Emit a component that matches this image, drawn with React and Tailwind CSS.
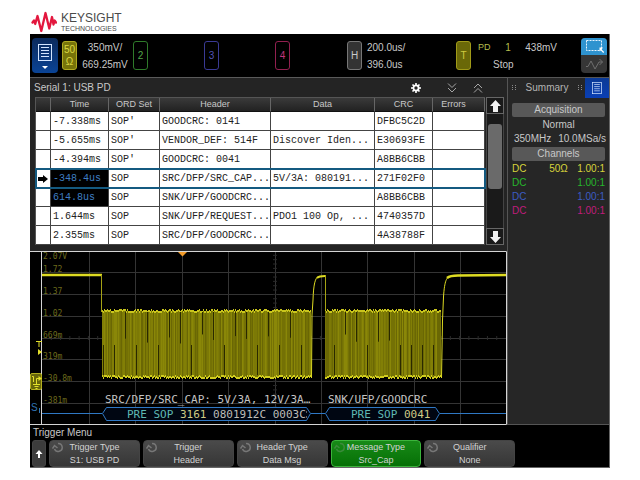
import React from "react";

const rows = [
  { time: "-7.338ms", ord: "SOP'", header: "GOODCRC: 0141", data: "", crc: "DFBC5C2D" },
  { time: "-5.655ms", ord: "SOP'", header: "VENDOR_DEF: 514F", data: "Discover Iden...", crc: "E30693FE" },
  { time: "-4.394ms", ord: "SOP'", header: "GOODCRC: 0041", data: "", crc: "A8BB6CBB" },
  { time: "-348.4us", ord: "SOP", header: "SRC/DFP/SRC_CAP...", data: "5V/3A: 080191...", crc: "271F02F0", selected: true, inView: true },
  { time: "614.8us", ord: "SOP", header: "SNK/UFP/GOODCRC...", data: "", crc: "A8BB6CBB", inView: true },
  { time: "1.644ms", ord: "SOP", header: "SNK/UFP/REQUEST...", data: "PDO1 100 Op, ...", crc: "4740357D" },
  { time: "2.355ms", ord: "SOP", header: "SRC/DFP/GOODCRC...", data: "", crc: "4A38788F" },
];

const softKeys = [
  { label: "Trigger Type", value: "S1: USB PD" },
  { label: "Trigger", value: "Header" },
  { label: "Header Type", value: "Data Msg" },
  { label: "Message Type", value: "Src_Cap", active: true },
  { label: "Qualifier", value: "None" },
];

function Logo() {
  return (
    <header className="flex h-[34px] items-center gap-[4px] pl-[1px] pt-[9px]">
      <svg className="h-[22px] w-[26px]" viewBox="0 0 26 22" fill="none" stroke="#e3173e" strokeWidth="2.3" strokeLinecap="round" strokeLinejoin="round" aria-hidden="true">
        <path d="M1.5 11.5 L3 9.5 L4.2 13 L6.500 5 L10.300 20 L14.500 2 L18.300 17.5 L21 6 L22.500 13.5 L23.600 9.5 L25 11.5" />
      </svg>
      <div className="text-[#4a4a4a]">
        <div className="text-[12px] leading-[14px]">KEYSIGHT</div>
        <div className="text-[7px] leading-[8px]">TECHNOLOGIES</div>
      </div>
    </header>
  );
}

function ListIcon({ className }) {
  return (
    <svg className={className} viewBox="0 0 14 17" fill="none" stroke="#d5e6ff" aria-hidden="true">
      <rect x="0.5" y="0.5" width="13" height="16" />
      <path d="M3 3.5h8M3 6.5h8M3 9.5h8M3 12.5h8" />
    </svg>
  );
}

function Readout({ top, bottom, className }) {
  return (
    <div className={className}>
      <div>{top}</div>
      <div>{bottom}</div>
    </div>
  );
}

const badge = "flex h-[29px] w-[15px] shrink-0 flex-col items-center justify-center rounded-[3px] border text-[10px] leading-[12px]";

function StatusBar() {
  return (
    <div className="flex h-[43px] items-center pl-[2px] pr-[2px] text-[10px] leading-[17px] text-[#c8c8c8]">
      <button aria-label="Menu" className="mr-[4px] flex h-[35px] w-[26px] shrink-0 flex-col items-center justify-end gap-[5px] rounded-[4px] bg-linear-to-b from-[#0b2a5c] to-[#0a4496] pb-[4px]">
        <ListIcon className="h-[17px] w-[14px]" />
        <svg className="h-[3px] w-[6px]" viewBox="0 0 6 3" aria-hidden="true"><path d="M0 0h6L3 3z" fill="#fff" /></svg>
      </button>
      <div className="grid flex-1 grid-cols-[71fr_71fr_71fr_71fr_110fr_125fr] items-center">
        <div className="flex items-center">
          <button className={badge + " border-[#b0aa20] bg-[#77740a] text-[#dcd844]"}><span>50</span><span>Ω</span></button>
          <Readout top="350mV/" bottom="669.25mV" className="flex-1 whitespace-nowrap text-center" />
        </div>
        <button className={badge + " border-[#2f7a2a] text-[#52a548]"}>2</button>
        <button className={badge + " border-[#3a3a94] text-[#5353b8]"}>3</button>
        <button className={badge + " border-[#922050] text-[#c0357c]"}>4</button>
        <div className="flex items-center gap-[5px] pl-[1px]">
          <button className={badge + " border-[#777] bg-[#333] text-[#c8c8c8]"}>H</button>
          <Readout top="200.0us/" bottom="396.0us" />
        </div>
        <div className="flex items-center gap-[7px]">
          <button className={badge + " border-[#a09a18] bg-[#6a6808] text-[#cfcb40]"}>T</button>
          <div className="flex-1 pr-[24px]">
            <div className="flex justify-between">
              <span className="text-[9px] text-[#b5bd4c]">PD</span>
              <span className="text-[#b5bd4c]">1</span>
              <span>438mV</span>
            </div>
            <div className="pl-[15px]">Stop</div>
          </div>
        </div>
      </div>
      <button aria-label="Zoom selection" className="flex h-[35px] w-[26px] shrink-0 flex-col overflow-hidden rounded-[4px] bg-[#363636]">
        <svg className="h-full w-full" viewBox="0 0 26 35" fill="none" aria-hidden="true">
          <rect width="26" height="17" fill="#2f93cf" />
          <rect x="5.5" y="2.5" width="15" height="10" stroke="#e8f4ff" strokeDasharray="2 1" />
          <path d="M18.500 9.500v4l1.200-1.200 2.500 2.700 1-1-2.600-2.600L22 9.500z" fill="#fff" />
          <path d="M5 28.500h2l3-5.500 4 8 4-7h3.500M18.500 21l3 3-3 3" stroke="#6f6f6f" />
        </svg>
      </button>
    </div>
  );
}

function Arrow({ down }) {
  return (
    <svg className="h-[12px] w-[11px]" viewBox="0 0 11 12" aria-hidden="true">
      <path d={down ? "M5.500 12L0 6h3V0h5v6h3z" : "M5.500 0L0 6h3v6h5V6h3z"} fill="#f2f2f2" />
    </svg>
  );
}

function Lister() {
  const th = "border-b border-r border-[#111] border-r-[#666] bg-linear-to-b from-[#3a3a3a] to-[#222] p-0 text-center font-normal";
  const td = "overflow-hidden whitespace-nowrap border-b border-r border-[#444] p-0 pl-[2px] pt-[2px]";
  return (
    <section className="border-t border-[#5a5a5a] bg-[#242424] pb-[6px]">
      <div className="flex h-[19px] items-center pl-[4px] pr-[24px] text-[10px] text-[#c8c8c8]">
        <h2 className="flex-1">Serial 1: USB PD</h2>
        <button aria-label="Settings" className="mr-[26px]">
          <svg className="h-[10px] w-[10px]" viewBox="0 0 10 10" fill="none" stroke="#fff" aria-hidden="true">
            <circle cx="5" cy="5" r="2.600" strokeWidth="1.800" />
            <path strokeWidth="1.600" d="M5 0v2M5 8v2M0 5h2M8 5h2M1.500 1.500l1.400 1.400M7.100 7.100l1.400 1.400M8.500 1.500L7.100 2.900M2.900 7.100L1.500 8.500" />
          </svg>
        </button>
        <button aria-label="Page down" className="mr-[16px]">
          <svg className="h-[10px] w-[10px]" viewBox="0 0 10 10" fill="none" stroke="#a5a5a5" aria-hidden="true"><path d="M1 .5l4 4 4-4M1 5l4 4 4-4" /></svg>
        </button>
        <button aria-label="Page up">
          <svg className="h-[10px] w-[10px]" viewBox="0 0 10 10" fill="none" stroke="#a5a5a5" aria-hidden="true"><path d="M1 5l4-4 4 4M1 9.500l4-4 4 4" /></svg>
        </button>
      </div>
      <div className="flex pl-[5px] pr-[3px]">
        <table className="min-w-0 flex-1 table-fixed border-separate border-spacing-0 border-l border-t border-[#555]">
          <colgroup>
            <col className="w-[15px]" />
            <col className="w-[58px]" />
            <col className="w-[51px]" />
            <col className="w-[110px]" />
            <col className="w-[104px]" />
            <col className="w-[58px]" />
            <col />
          </colgroup>
          <thead>
            <tr className="h-[14px] text-[9px] leading-[13px] text-[#c8c8c8]">
              <th className={th} aria-label="Cursor" />
              <th className={th}>Time</th>
              <th className={th}>ORD Set</th>
              <th className={th}>Header</th>
              <th className={th}>Data</th>
              <th className={th}>CRC</th>
              <th className={th + " pr-[10px]"}>Errors</th>
            </tr>
          </thead>
          <tbody className="bg-white font-['Liberation_Mono',monospace] text-[10px] leading-[16px] text-[#222]">
            {rows.map((r) => (
              <tr key={r.time} className={r.selected ? "h-[19px] outline-2 -outline-offset-1 outline-[#145a80]" : "h-[19px]"}>
                <td className={td}>
                  {r.selected && (
                    <svg className="h-[8px] w-[10px]" viewBox="0 0 10 8" aria-label="Selected"><path d="M0 2h5V0l5 4-5 4V6H0z" fill="#000" /></svg>
                  )}
                </td>
                <td className={r.inView ? td + " bg-black text-[#3f7fc4]" : td}>{r.time}</td>
                <td className={td}>{r.ord}</td>
                <td className={td}>{r.header}</td>
                <td className={td}>{r.data}</td>
                <td className={td}>{r.crc}</td>
                <td className={td} />
              </tr>
            ))}
          </tbody>
        </table>
        <div className="ml-[1px] flex w-[18px] flex-col bg-[#1a1a1a]">
          <button aria-label="Scroll up" className="flex h-[17px] items-center justify-center border border-[#666]"><Arrow /></button>
          <div className="flex-1 border-x border-[#444] px-[1px] pt-[10px]">
            <div className="h-[65px] rounded-[3px] bg-[#6a6a6a]" />
          </div>
          <button aria-label="Scroll down" className="flex h-[17px] items-center justify-center border border-[#666]"><Arrow down /></button>
        </div>
      </div>
    </section>
  );
}

const noise = (i) => {
  const v = Math.sin(i * 12.9898) * 43758.5453;
  return v - Math.floor(v);
};

const shades = ["#827f06", "#747105", "#8a8708", "#6a6704", "#7c7906"];

function Burst({ from, to }) {
  const bars = [];
  for (let x = from; x < to; x += 1) {
    const n = noise(x);
    const top = 309 + Math.floor(noise(x + 500) * 3);
    const bottom = 377 + Math.floor(noise(x + 900) * 3);
    bars.push(
      <g key={x}>
        <rect x={x} y={top} width="1" height={bottom - top} fill={shades[Math.floor(n * 5)]} />
        <rect x={x} y={top} width="1" height="2" fill="#c9c51c" />
        <rect x={x} y={bottom - 2} width="1" height="2" fill="#d0cc1e" />
        {x % 11 === 4 && <rect x={x} y={n > 0.5 ? 312 : 345} width="1" height={n > 0.5 ? 12 + n * 20 : 30} fill="#2a2900" />}
      </g>
    );
  }
  return <g>{bars}</g>;
}

const gridX = [89, 135, 182, 228, 275, 321, 367, 414, 460];
const gridY = [272, 294, 316, 338, 359, 381, 403];
const scale = [
  ["2.07V", 259], ["1.72", 272], ["1.37", 294], ["1.02", 316],
  ["669m", 338], ["319m", 359], ["-30.8m", 381], ["-381m", 403],
];

function Scope() {
  const ticks = [];
  for (let i = 1; i < 50; i += 1) ticks.push(<path key={"h" + i} d={"M" + (42 + i * 9.28) + " 336v4"} />);
  for (let i = 1; i < 40; i += 1) ticks.push(<path key={"v" + i} d={"M273 " + (251 + i * 4.34) + "h4"} />);
  return (
    <svg className="block w-full bg-black" viewBox="30 251 477 174" role="img" aria-label="Channel 1 waveform with USB PD decode">
      <g stroke="#343434">
        {gridX.map((x) => <path key={x} d={"M" + (x + 0.5) + " 252V424"} />)}
        {gridY.map((y) => <path key={y} d={"M42 " + (y + 0.5) + "H506"} />)}
      </g>
      <g stroke="#2a2a2a">{ticks}</g>
      <g className="font-['DejaVu_Sans_Mono',monospace] text-[8px]" fill="#6c6a1c">
        {scale.map(([t, y]) => <text key={t} x="43" y={y}>{t}</text>)}
      </g>
      <Burst from={102} to={311} />
      <Burst from={325} to={441} />
      <g fill="none" stroke="#dedb22">
        <path strokeWidth="2.500" d="M42 275H102" />
        <path d="M101.500 275V312" stroke="#a5a215" />
        <path d="M311.500 378L312 315L313 300C313.500 285 315 277 319 276.500" />
        <path strokeWidth="2" d="M317 278C319 276 321 276 325 276" />
        <path d="M325.500 275V310" stroke="#a5a215" />
        <path d="M441.500 378L442.500 320L443.500 297C444.500 280 447 277 450 276.500" />
        <path strokeWidth="2.500" d="M447 278C450 275.500 453 275.500 458 275.500L506 275" />
      </g>
      <path d="M178 252h9l-4.500 4.500z" fill="#f09a2a" />
      <g className="font-['DejaVu_Sans_Mono',monospace] text-[11px]" fill="#c4c4c4">
        <text x="105" y="403">SRC/DFP/SRC_CAP: 5V/3A, 12V/3A…</text>
        <text x="328" y="403">SNK/UFP/GOODCRC</text>
      </g>
      <g fill="#000612" stroke="#2f78c4">
        <path d="M42 413.500H102M311 413.500H325M440 413.500H506" />
        <path d="M102.500 413.500L106.500 407.500H306.500L310.500 413.500L306.500 420.500H106.500Z" />
        <path d="M325.500 413.500L329.500 407.500H435.500L439.500 413.500L435.500 420.500H329.500Z" />
      </g>
      <g className="whitespace-pre font-['DejaVu_Sans_Mono',monospace] text-[11px]" fill="#5fb9b4">
        <text x="127" y="418">PRE SOP <tspan fill="#cfcb86">3161</tspan><tspan fill="#bdbdb8"> 0801912C 0003C</tspan></text>
        <text x="351" y="418">PRE SOP <tspan fill="#cfcb86">0041</tspan></text>
      </g>
      <path d="M306.500 411.500v1M306.500 416.500v1" stroke="#bdbdb8" />
      <path d="M41.500 251V425M30 251.500H506.500V424.500H30" fill="none" stroke="#d4d4d4" />
      <g fill="#e4e02a">
        <path d="M36 341h6v1h-2.500v5h-1v-5H36z" />
        <path d="M38 349l4 3-4 3z" />
      </g>
      <rect x="30.500" y="373.500" width="11" height="16" rx="1.500" fill="#68660a" stroke="#b5b11e" />
      <path d="M32 376.500h1.500V382M36.500 384v-5.500h2.500M33 384.500h7M34.500 386.500h4M35.500 388.500h2" fill="none" stroke="#e4e02a" />
      <path d="M38.500 376l3.500 2.500-3.500 2.500z" fill="#e4e02a" />
      <text x="31" y="411" className="text-[10px]" fill="#2f74b4">S</text>
      <path d="M39.500 408v5" stroke="#2f74b4" />
    </svg>
  );
}

const channels = [
  { imp: "50Ω", color: "text-[#d8d43c]" },
  { imp: "", color: "text-[#27b82c]" },
  { imp: "", color: "text-[#3c5cc4]" },
  { imp: "", color: "text-[#c01c7c]" },
];

function Grip() {
  return (
    <svg className="h-[6px] w-[4px]" viewBox="0 0 4 6" fill="#8a8a8a" aria-hidden="true">
      <path d="M0 0h1v1H0zM3 0h1v1H3zM0 2h1v1H0zM3 2h1v1H3zM0 4h1v1H0zM3 4h1v1H3z" />
    </svg>
  );
}

function Summary() {
  const bar = "mx-[4px] rounded-[2px] bg-[#585858] text-center leading-[14px]";
  return (
    <aside className="w-[102px] shrink-0 border border-[#555] border-r-0 bg-[#262626] text-[10px] leading-[14px] text-[#c8c8c8]">
      <div className="flex h-[20px]">
        <div className="flex flex-1 items-center justify-between rounded-t-[3px] pl-[4px] pr-[3px] text-[#b4b4b4]">
          <Grip />
          <h2>Summary</h2>
          <Grip />
        </div>
        <button aria-label="Side bar menu" className="flex w-[24px] items-center justify-center bg-linear-to-b from-[#0b3a96] to-[#0a3fb4]">
          <ListIcon className="h-[12px] w-[10px]" />
        </button>
      </div>
      <div className={bar + " mt-[5px]"}>Acquisition</div>
      <div className="mt-[1px] text-center">Normal</div>
      <div className="flex justify-between pl-[6px] pr-[3px]"><span>350MHz</span><span>10.0MSa/s</span></div>
      <div className={bar + " mt-[1px] mb-[1px]"}>Channels</div>
      <table className="w-full table-fixed leading-[14px]">
        <tbody>
          {channels.map((c) => (
            <tr key={c.color} className={c.color}>
              <td className="p-0 pl-[4px]">DC</td>
              <td className="p-0 text-center">{c.imp}</td>
              <td className="p-0 pr-[4px] text-right">1.00:1</td>
            </tr>
          ))}
        </tbody>
      </table>
    </aside>
  );
}

function SoftKey({ label, value, active }) {
  return (
    <button className={(active ? "border-[#3cb43c] bg-linear-to-b from-[#178a17] to-[#067006]" : "border-[#444] bg-linear-to-b from-[#4a4a4a] to-[#363636]") + " flex h-[27px] flex-col justify-center rounded-[4px] border text-[9px] leading-[13px] text-[#d2d2d2]"}>
      <span className="grid w-full grid-cols-[14px_1fr_14px] items-center">
        <svg className="ml-[2px] h-[11px] w-[12px]" viewBox="0 0 12 11" fill="none" stroke={active ? "#3c8a3c" : "#777"} strokeWidth="1.500" aria-hidden="true">
          <path d="M6 1.500a4 4 0 1 1-3.500 5.500M.5 6.500L2.500 3.500l3 2.500" />
        </svg>
        <span className="whitespace-nowrap">{label}</span>
      </span>
      <span className="w-full text-center">{value}</span>
    </button>
  );
}

export default function App() {
  return (
    <main className="min-h-screen bg-white px-[30px] font-['Liberation_Sans',Arial,sans-serif]">
      <Logo />
      <div className="border-b border-r border-[#666] bg-black">
        <StatusBar />
        <div className="flex">
          <div className="min-w-0 flex-1">
            <Lister />
            <Scope />
          </div>
          <Summary />
        </div>
        <nav aria-label="Trigger Menu" className="pl-[2px]">
          <h2 className="h-[15px] pl-[1px] text-[10px] leading-[15px] text-[#c8c8c8]">Trigger Menu</h2>
          <div className="flex gap-[3px]">
            <button aria-label="Back" className="flex h-[27px] w-[14px] shrink-0 items-center justify-center rounded-[3px] border border-[#444] bg-[#3c3c3c]">
              <svg className="h-[8px] w-[8px]" viewBox="0 0 8 8" aria-hidden="true"><path d="M4 0L.5 4H3v4h2V4h2.500z" fill="#fff" /></svg>
            </button>
            <div className="grid flex-1 grid-cols-6 gap-[3px]">
              {softKeys.map((k) => <SoftKey key={k.label} {...k} />)}
            </div>
          </div>
        </nav>
      </div>
    </main>
  );
}
